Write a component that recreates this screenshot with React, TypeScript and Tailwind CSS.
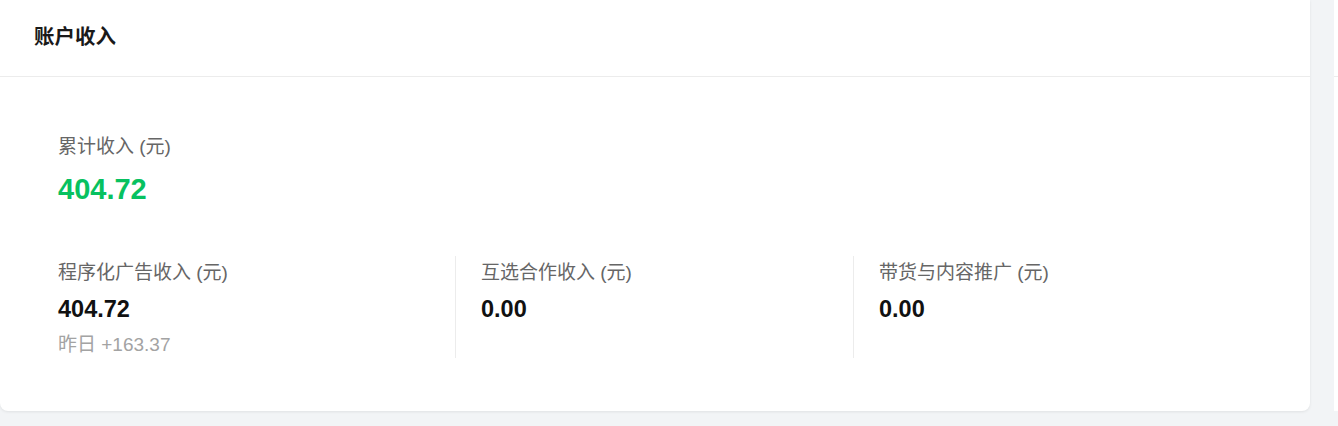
import React from 'react';

const font = { fontFamily: '"Liberation Sans", "Noto Sans CJK SC", sans-serif' };

const columns = [
  { label: '程序化广告收入 (元)', value: '404.72', sub: '昨日 +163.37' },
  { label: '互选合作收入 (元)', value: '0.00' },
  { label: '带货与内容推广 (元)', value: '0.00' },
];

const App: React.FC = () => {
  return (
    <div className="w-[1338px] h-[426px] bg-[#f2f4f6] flex gap-[24px] overflow-hidden" style={font}>
      <div className="w-[1310px] shrink-0 h-[411px] bg-white rounded-b-lg shadow-[0_1px_3px_rgba(0,0,0,0.08)] flex flex-col">
        <div className="h-[77px] border-b border-[#ececec] flex items-center px-[34px] pb-[2px]">
          <h2 className="text-[20.5px] font-bold text-[#1a1a1a]">账户收入</h2>
        </div>
        <div className="px-[58px] pt-[58px]">
          <div className="text-[19px] leading-[24px] text-[#666]">累计收入 (元)</div>
          <div className="mt-[12px] text-[29px] leading-[36px] font-bold text-[#07c160]">404.72</div>
          <div className="mt-[49px] grid grid-cols-[397px_398px_1fr]">
            {columns.map((c, i) => (
              <div key={c.label} className={`h-[102px] pt-[5px] ${i > 0 ? 'border-l border-[#ececec] pl-[25px]' : ''}`}>
                <div className="text-[19px] leading-[24px] text-[#666]">{c.label}</div>
                <div className="mt-[10px] text-[23.5px] leading-[28px] font-bold text-[#111]">{c.value}</div>
                {c.sub && <div className="mt-[10px] text-[19px] leading-[24px] text-[#a3a3a3]">{c.sub}</div>}
              </div>
            ))}
          </div>
        </div>
      </div>
      <div className="w-[40px] shrink-0 h-[411px] bg-white flex flex-col">
        <div className="h-[77px] border-b border-[#ececec]" />
      </div>
    </div>
  );
};

export default App;
